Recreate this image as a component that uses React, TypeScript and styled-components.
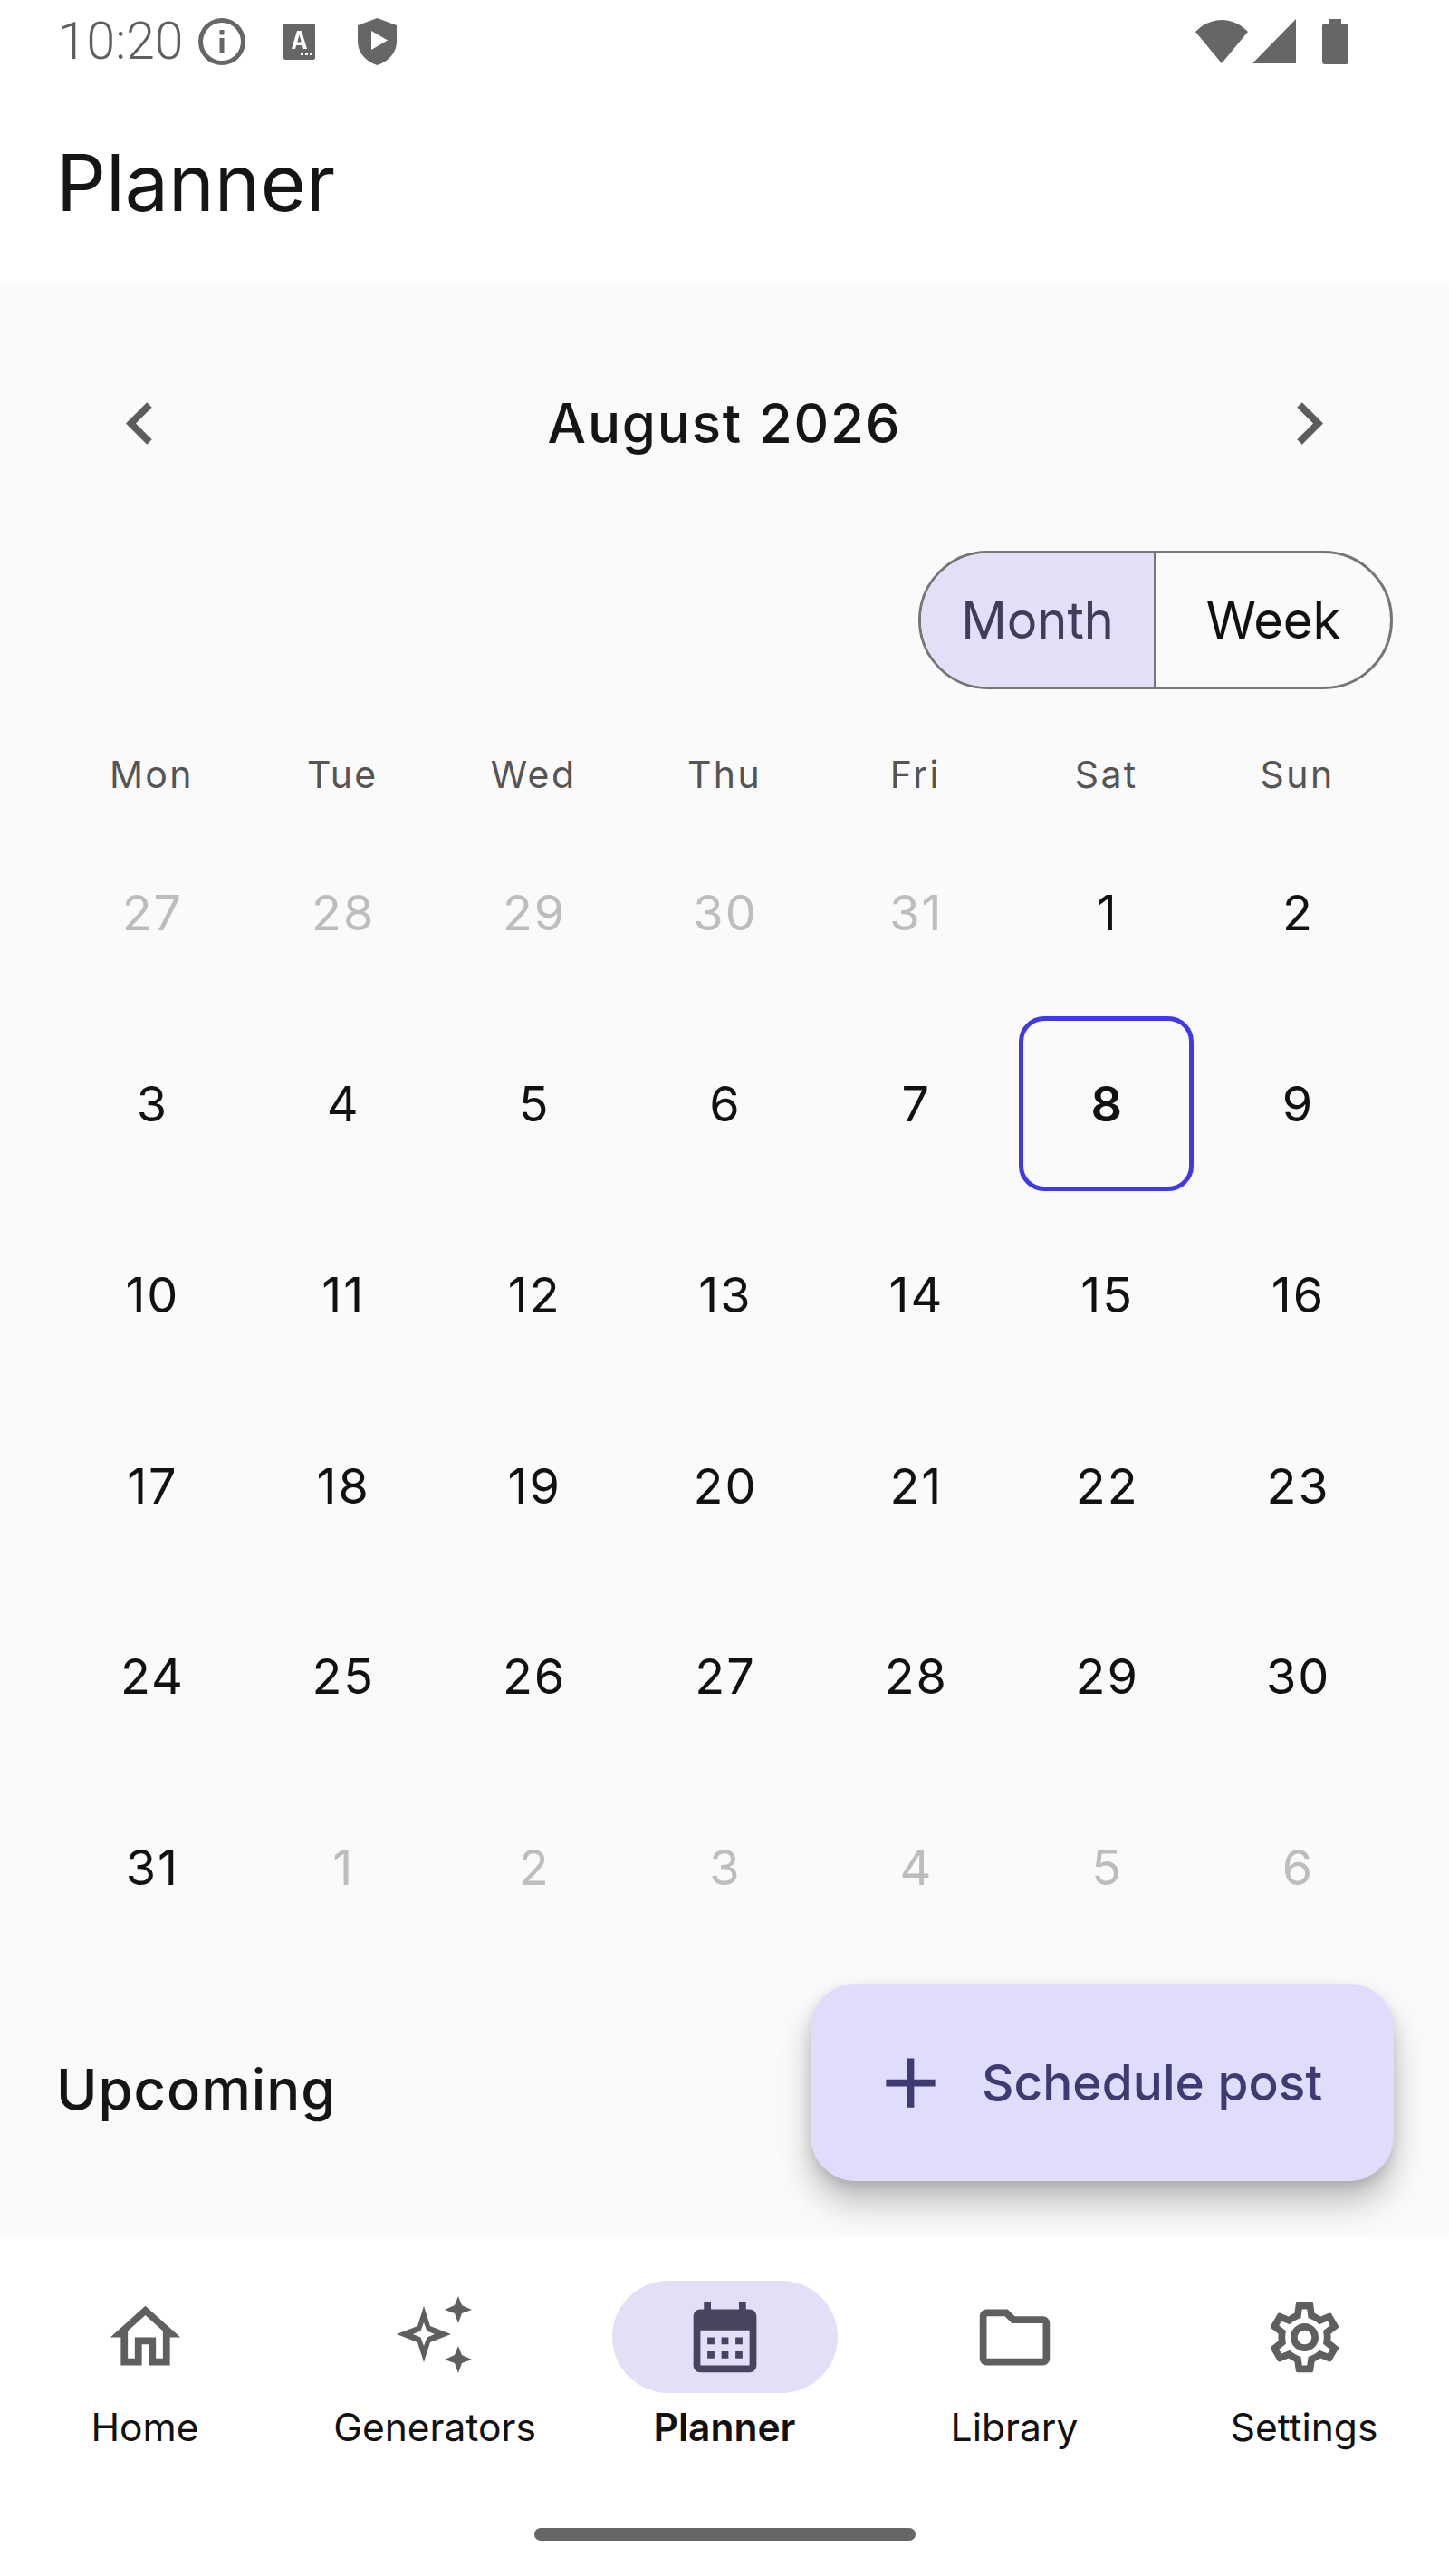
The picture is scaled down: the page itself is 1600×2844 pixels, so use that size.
import React from "react";
import styled, { createGlobalStyle } from "styled-components";

const Global = createGlobalStyle`
  html, body { margin: 0; padding: 0; background: #fff; }
  * { box-sizing: border-box; }
`;

const Screen = styled.div`
  width: 1600px;
  height: 2844px;
  display: flex;
  flex-direction: column;
  overflow: hidden;
  font-family: Inter, "Liberation Sans", sans-serif;
  color: #111;
  background: #fff;
`;

const StatusBar = styled.div`
  height: 92px;
  display: flex;
  align-items: center;
  justify-content: space-between;
  padding: 0 111px 0 64px;
  color: #666;
`;
const StatusGroup = styled.div`
  display: flex;
  align-items: center;
`;
const Clock = styled.span`
  font-family: Roboto, sans-serif;
  font-size: 57px;
  font-weight: 300;
  color: #5f5f5f;
  line-height: 92px;
  margin-right: 17px;
`;

const AppBar = styled.header`
  height: 220px;
  padding: 0 0 0 62px;
  display: flex;
  align-items: center;
`;
const Title = styled.h1`
  margin: 0;
  font-size: 86px;
  font-weight: 400;
  color: #151515;
  line-height: 1;
`;

const Body = styled.main`
  position: relative;
  flex: 1;
  background: #fafafa;
  padding: 89px 62px 0;
`;
const MonthRow = styled.div`
  height: 132px;
  display: flex;
  align-items: center;
  justify-content: space-between;
  padding: 0 46px;
  color: #5c5c5c;
`;
const MonthTitle = styled.h2`
  margin: 0;
  font-size: 60px;
  font-weight: 500;
  letter-spacing: 1.8px;
  color: #151515;
`;
const ToggleRow = styled.div`
  display: flex;
  justify-content: flex-end;
  margin-top: 75px;
`;
const Toggle = styled.div`
  display: flex;
  width: 524px;
  height: 153px;
  border: 3px solid #757575;
  border-radius: 77px;
  overflow: hidden;
`;
const ToggleOption = styled.div<{ $active?: boolean }>`
  display: flex;
  align-items: center;
  justify-content: center;
  font-size: 56px;
  font-weight: 400;
  flex: ${(p) => (p.$active ? "0 0 260px" : "1")};
  background: ${(p) => (p.$active ? "#e2dff7" : "transparent")};
  color: ${(p) => (p.$active ? "#3f3d5a" : "#111")};
  border-right: ${(p) => (p.$active ? "3px solid #757575" : "none")};
`;
const Weekdays = styled.div`
  display: grid;
  grid-template-columns: repeat(7, 1fr);
  margin-top: 51px;
  height: 90px;
  padding-bottom: 5px;
  align-items: center;
`;
const Weekday = styled.div`
  text-align: center;
  font-size: 41px;
  font-weight: 400;
  letter-spacing: 2.4px;
  color: #555;
`;
const Grid = styled.div`
  display: grid;
  grid-template-columns: repeat(7, 1fr);
`;
const Day = styled.div`
  aspect-ratio: 1 / 1;
  padding: 9px;
`;
const DayInner = styled.div<{ $muted?: boolean; $selected?: boolean }>`
  width: 100%;
  height: 100%;
  display: flex;
  align-items: center;
  justify-content: center;
  font-size: 54px;
  letter-spacing: 2px;
  padding-left: 2px;
  border-radius: 28px;
  color: ${(p) => (p.$muted ? "#bdbdbd" : "#111")};
  font-weight: ${(p) => (p.$selected ? 600 : 400)};
  border: ${(p) => (p.$selected ? "5px solid #3f3ae6" : "none")};
`;
const Upcoming = styled.h3`
  margin: 0;
  font-size: 61.5px;
  font-weight: 500;
  letter-spacing: 1px;
  color: #151515;
  margin-top: 105px;
  line-height: 70px;
`;
const Fab = styled.button`
  position: absolute;
  right: 61px;
  bottom: 62px;
  width: 644px;
  height: 218px;
  border: 0;
  border-radius: 50px;
  background: #e0ddfc;
  color: #3e3a72;
  display: flex;
  align-items: center;
  padding: 0 0 0 64px;
  gap: 32px;
  font-family: inherit;
  font-size: 55px;
  font-weight: 500;
  box-shadow: 0 24px 36px rgba(0, 0, 0, 0.24), 0 6px 14px rgba(0, 0, 0, 0.12);
`;

const Nav = styled.nav`
  position: relative;
  z-index: 1;
  height: 374px;
  background: #fff;
  display: flex;
  flex-direction: column;
`;
const NavItems = styled.div`
  display: flex;
  padding-top: 48px;
`;
const NavItem = styled.div`
  flex: 1;
  display: flex;
  flex-direction: column;
  align-items: center;
`;
const NavPill = styled.div<{ $active?: boolean }>`
  width: 249px;
  height: 124px;
  border-radius: 62px;
  display: flex;
  align-items: center;
  justify-content: center;
  color: ${(p) => (p.$active ? "#47445f" : "#5f5f5f")};
  background: ${(p) => (p.$active ? "#e2dff7" : "transparent")};
`;
const NavLabel = styled.span<{ $active?: boolean }>`
  margin-top: 14px;
  font-size: 42.5px;
  line-height: 48px;
  color: #111;
  font-weight: ${(p) => (p.$active ? 600 : 400)};
`;
const HomeBar = styled.div`
  width: 421px;
  height: 14px;
  border-radius: 7px;
  background: #666;
  margin: 87px auto 0;
`;

const Icon = ({ d, size = 93 }: { d: string; size?: number }) => (
  <svg width={size} height={size} viewBox="0 0 24 24" fill="currentColor">
    <path d={d} />
  </svg>
);

const HOME = "M12 5.69l5 4.5V18h-2v-6H9v6H7v-7.81l5-4.5M12 3L2 12h3v8h6v-6h2v6h6v-8h3L12 3z";
const CAL = "M19 4h-1V2h-2v2H8V2H6v2H5c-1.1 0-1.99.9-1.99 2L3 20c0 1.1.9 2 2 2h14c1.1 0 2-.9 2-2V6c0-1.1-.9-2-2-2zm0 16H5V10h14v10zM9 14H7v-2h2v2zm4 0h-2v-2h2v2zm4 0h-2v-2h2v2zm-8 4H7v-2h2v2zm4 0h-2v-2h2v2zm4 0h-2v-2h2v2z";
const FOLDER = "M9.17 6l2 2H20v10H4V6h5.17M10 4H4c-1.1 0-1.99.9-1.99 2L2 18c0 1.1.9 2 2 2h16c1.1 0 2-.9 2-2V8c0-1.1-.9-2-2-2h-8l-2-2z";
const GEAR = "M19.43 12.98c.04-.32.07-.64.07-.98 0-.34-.03-.66-.07-.98l2.11-1.65c.19-.15.24-.42.12-.64l-2-3.46c-.09-.16-.26-.25-.44-.25-.06 0-.12.01-.17.03l-2.49 1c-.52-.4-1.08-.73-1.69-.98l-.38-2.65C14.46 2.18 14.25 2 14 2h-4c-.25 0-.46.18-.49.42l-.38 2.65c-.61.25-1.17.59-1.69.98l-2.49-1c-.06-.02-.12-.03-.18-.03-.17 0-.34.09-.43.25l-2 3.46c-.13.22-.07.49.12.64l2.11 1.65c-.04.32-.07.65-.07.98 0 .33.03.66.07.98l-2.11 1.65c-.19.15-.24.42-.12.64l2 3.46c.09.16.26.25.44.25.06 0 .12-.01.17-.03l2.49-1c.52.4 1.08.73 1.69.98l.38 2.65c.03.24.24.42.49.42h4c.25 0 .46-.18.49-.42l.38-2.65c.61-.25 1.17-.59 1.69-.98l2.49 1c.06.02.12.03.18.03.17 0 .34-.09.43-.25l2-3.46c.12-.22.07-.49-.12-.64l-2.11-1.65zm-1.98-1.71c.04.31.05.52.05.73 0 .21-.02.43-.05.73l-.14 1.13.89.7 1.08.84-.7 1.21-1.27-.51-1.04-.42-.9.68c-.43.32-.84.56-1.25.73l-1.06.43-.16 1.13-.2 1.35h-1.4l-.19-1.35-.16-1.13-1.06-.43c-.43-.18-.83-.41-1.23-.71l-.91-.7-1.06.43-1.27.51-.7-1.21 1.08-.84.89-.7-.14-1.13c-.03-.31-.05-.54-.05-.74s.02-.43.05-.73l.14-1.13-.89-.7-1.08-.84.7-1.21 1.27.51 1.04.42.9-.68c.43-.32.84-.56 1.25-.73l1.06-.43.16-1.13.2-1.35h1.39l.19 1.35.16 1.13 1.06.43c.43.18.83.41 1.23.71l.91.7 1.06-.43 1.27-.51.7 1.21-1.07.85-.89.7.14 1.13zM12 8c-2.21 0-4 1.79-4 4s1.79 4 4 4 4-1.79 4-4-1.79-4-4-4zm0 6c-1.1 0-2-.9-2-2s.9-2 2-2 2 .9 2 2-.9 2-2 2z";
const PLUS = "M19 13h-6v6h-2v-6H5v-2h6V5h2v6h6v2z";
const PREV = "M15.41 7.41L14 6l-6 6 6 6 1.41-1.41L10.83 12z";
const NEXT = "M10 6L8.59 7.41 13.17 12l-4.58 4.59L10 18l6-6z";

const Sparkle = () => (
  <svg width="93" height="93" viewBox="0 0 93 93" fill="currentColor">
    <path
      fillRule="evenodd"
      d="M34 12 L41 34 L64 43 L41 52 L34 74 L27 52 L4 43 L27 34 Z M34 30 L30.5 39.5 L22 43 L30.5 46.5 L34 56 L37.5 46.5 L46 43 L37.5 39.5 Z"
    />
    <path d="M72 1 L76 11 L87 16 L76 20 L72 31 L68 20 L57 16 L68 11 Z" />
    <path d="M72 56 L76 66 L87 71 L76 75 L72 86 L68 75 L57 71 L68 66 Z" />
  </svg>
);

const StatusIcon = styled.svg<{ $mr?: number }>`
  display: block;
  margin-right: ${(p) => p.$mr ?? 0}px;
  fill: #666;
`;

const prev = [27, 28, 29, 30, 31];
const cur = Array.from({ length: 31 }, (_, i) => i + 1);
const next = [1, 2, 3, 4, 5, 6];

const navItems = [
  { label: "Home", icon: <Icon d={HOME} /> },
  { label: "Generators", icon: <Sparkle /> },
  { label: "Planner", icon: <Icon d={CAL} />, active: true },
  { label: "Library", icon: <Icon d={FOLDER} /> },
  { label: "Settings", icon: <Icon d={GEAR} /> },
];

export default function App() {
  return (
    <Screen>
      <Global />
      <StatusBar>
        <StatusGroup>
          <Clock>10:20</Clock>
          <StatusIcon $mr={42} width="52" height="52" viewBox="0 0 52 52">
            <path
              fillRule="evenodd"
              d="M26 0a26 26 0 1 0 0 52a26 26 0 1 0 0-52zM26 5a21 21 0 1 1 0 42a21 21 0 1 1 0-42z"
            />
            <rect x="23.5" y="22" width="5" height="17" />
            <rect x="23.5" y="13" width="5" height="5.5" />
          </StatusIcon>
          <StatusIcon $mr={47} width="35" height="40" viewBox="0 0 35 40">
            <path
              fillRule="evenodd"
              d="M2 0h31a2 2 0 0 1 2 2v36a2 2 0 0 1-2 2H2a2 2 0 0 1-2-2V2a2 2 0 0 1 2-2zM15 8l-6 20h4l1.2-4h6.6l1.2 4h4L20 8zM15.3 20.5l2.2-8 2.2 8zM19 32h3v3h-3zM24 32h3v3h-3zM29 32h3v3h-3z"
            />
          </StatusIcon>
          <StatusIcon width="43" height="52" viewBox="0 0 43 52">
            <path
              fillRule="evenodd"
              d="M21.5 0L43 8V26C43 38 34 48 21.5 52C9 48 0 38 0 26V8ZM15 14V35L33 24.5Z"
            />
          </StatusIcon>
        </StatusGroup>
        <StatusGroup>
          <StatusIcon $mr={5} width="58" height="48" viewBox="0 0 58 48">
            <path d="M29 48L0 13C8 5 18 0 29 0S50 5 58 13Z" />
          </StatusIcon>
          <StatusIcon $mr={29} width="48" height="50" viewBox="0 0 48 50">
            <path d="M48 0V49H0Z" />
          </StatusIcon>
          <StatusIcon width="29" height="50" viewBox="0 0 29 50">
            <path d="M8 0H21V5H26a3 3 0 0 1 3 3V47a3 3 0 0 1-3 3H3a3 3 0 0 1-3-3V8a3 3 0 0 1 3-3H8Z" />
          </StatusIcon>
        </StatusGroup>
      </StatusBar>
      <AppBar>
        <Title>Planner</Title>
      </AppBar>
      <Body>
        <MonthRow>
          <Icon d={PREV} size={93} />
          <MonthTitle>August 2026</MonthTitle>
          <Icon d={NEXT} size={93} />
        </MonthRow>
        <ToggleRow>
          <Toggle>
            <ToggleOption $active>Month</ToggleOption>
            <ToggleOption>Week</ToggleOption>
          </Toggle>
        </ToggleRow>
        <Weekdays>
          {["Mon", "Tue", "Wed", "Thu", "Fri", "Sat", "Sun"].map((d) => (
            <Weekday key={d}>{d}</Weekday>
          ))}
        </Weekdays>
        <Grid>
          {prev.map((d) => (
            <Day key={`p${d}`}>
              <DayInner $muted>{d}</DayInner>
            </Day>
          ))}
          {cur.map((d) => (
            <Day key={d}>
              <DayInner $selected={d === 8}>{d}</DayInner>
            </Day>
          ))}
          {next.map((d) => (
            <Day key={`n${d}`}>
              <DayInner $muted>{d}</DayInner>
            </Day>
          ))}
        </Grid>
        <Upcoming>Upcoming</Upcoming>
        <Fab>
          <Icon d={PLUS} />
          Schedule post
        </Fab>
      </Body>
      <Nav>
        <NavItems>
          {navItems.map((n) => (
            <NavItem key={n.label}>
              <NavPill $active={n.active}>{n.icon}</NavPill>
              <NavLabel $active={n.active}>{n.label}</NavLabel>
            </NavItem>
          ))}
        </NavItems>
        <HomeBar />
      </Nav>
    </Screen>
  );
}
